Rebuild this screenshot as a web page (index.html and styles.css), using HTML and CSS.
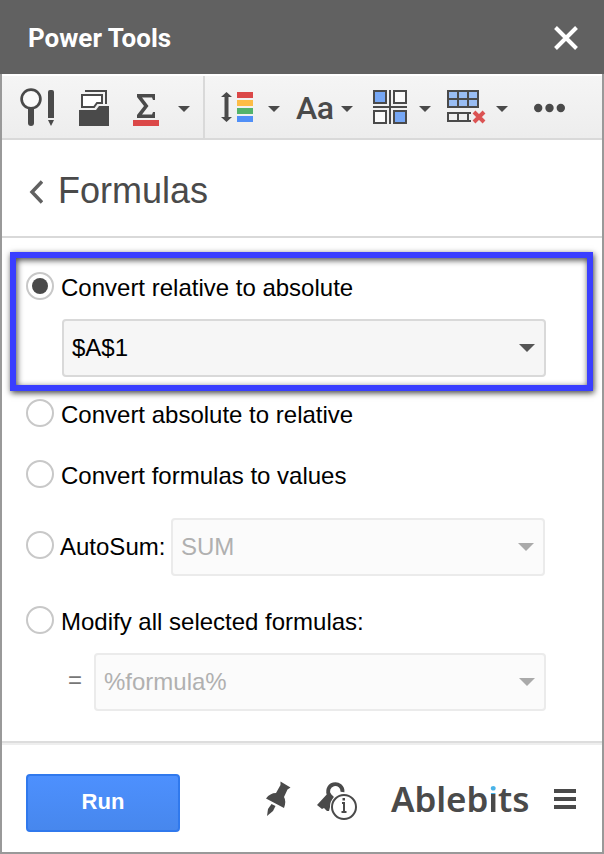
FILE: index.html
```html
<!DOCTYPE html>
<html lang="en">
<head>
    <meta charset="UTF-8">
    <meta name="viewport" content="width=device-width, initial-scale=1.0">
    <title>Power Tools</title>
    <link rel="stylesheet" href="styles.css">
</head>
<body>
    <div class="header">
        <h1>Power Tools</h1>
        <svg class="close" width="24" height="24" viewBox="0 0 24 24">
            <path d="M1.500 1.500L22.500 22.500M22.500 1.500L1.500 22.500" stroke="#fff" stroke-width="4"/>
        </svg>
    </div>

    <div class="panel">
        <div class="toolbar">
            <div class="tools-main">
                <!-- Search and edit -->
                <svg class="ic-search" width="36" height="38" viewBox="0 0 36 38">
                    <circle cx="11" cy="11" r="9.400" fill="#fafafa" stroke="#4a4a4a" stroke-width="2.700"/>
                    <path d="M11 21V35" stroke="#4a4a4a" stroke-width="6"/>
                    <path d="M11 30V35" stroke="#4a4a4a" stroke-width="6" stroke-linecap="round"/>
                    <path d="M28 4q0-2 2-2h2q2 0 2 2V30H28zM28 32h6l-3 6z" fill="#4a4a4a"/>
                </svg>
                <!-- Sheets folder -->
                <svg class="ic-folder" width="30" height="36" viewBox="0 0 30 36">
                    <path d="M6 1H27V14" fill="none" stroke="#4a4a4a" stroke-width="2"/>
                    <path d="M3 5H23V13H18L15 17H3z" fill="#fff" stroke="#4a4a4a" stroke-width="2"/>
                    <path d="M0 20H17L20 16H30V36H0z" fill="#4a4a4a"/>
                </svg>
                <!-- Sum -->
                <svg class="ic-sum" width="26" height="32" viewBox="0 0 26 32">
                    <path d="M4 0H22V6H20L19 3.500H9L15.500 12L9 20.500H19L20 18H22V24H4V21L11 12L4 3z" fill="#4a4a4a"/>
                    <rect y="26" width="26" height="6" fill="#db4848"/>
                </svg>
                <span class="arrow"></span>
            </div>
            <div class="tools-more">
                <!-- Sort by color -->
                <svg class="ic-sort" width="32" height="32" viewBox="0 0 32 32">
                    <path d="M5.500 1L11 6H7.500V26H11L5.500 31L0 26H3.500V6H0z" fill="#4a4a4a"/>
                    <rect x="16" y="1" width="16" height="6" fill="#db4848"/>
                    <rect x="16" y="9" width="16" height="6" fill="#fdbc45"/>
                    <rect x="16" y="17" width="16" height="6" fill="#53b36a"/>
                    <rect x="16" y="25" width="16" height="6" fill="#508ff7"/>
                </svg>
                <span class="arrow"></span>
                <span class="text-tool">Aa</span>
                <span class="arrow"></span>
                <!-- Split -->
                <svg class="ic-split" width="34" height="34" viewBox="0 0 34 34">
                    <g stroke="#4a4a4a" stroke-width="2" fill="#fafafa">
                        <rect x="1" y="1" width="12" height="12" fill="#76a7f5"/>
                        <rect x="21" y="1" width="12" height="12"/>
                        <rect x="1" y="21" width="12" height="12"/>
                        <rect x="21" y="21" width="12" height="12" fill="#76a7f5"/>
                        <path d="M17 0V34M0 17H34"/>
                    </g>
                </svg>
                <span class="arrow"></span>
                <!-- Clear rows -->
                <svg class="ic-clear" width="40" height="34" viewBox="0 0 40 34">
                    <g stroke="#4a4a4a" stroke-width="2" fill="none">
                        <path d="M1 1H31V17H1z" fill="#99bdf3"/>
                        <path d="M11 1V17M21 1V17M1 9H31"/>
                        <path d="M24 23H1V31H24M11 23V31M21 23V31"/>
                    </g>
                    <path d="M27 22L37 32M37 22L27 32" stroke="#db5353" stroke-width="4"/>
                </svg>
                <span class="arrow"></span>
                <svg class="ic-dots" width="32" height="8" viewBox="0 0 32 8">
                    <g fill="#4a4a4a">
                        <circle cx="4.200" cy="4" r="4.200"/>
                        <circle cx="15.500" cy="4" r="4.200"/>
                        <circle cx="26.800" cy="4" r="4.200"/>
                    </g>
                </svg>
            </div>
        </div>

        <div class="title">
            <svg width="14" height="24" viewBox="0 0 14 24">
                <path d="M13 1.500L3 12L13 22.500" fill="none" stroke="#616161" stroke-width="3.500"/>
            </svg>
            <h2>Formulas</h2>
        </div>

        <div class="options">
            <div class="highlight">
                <label class="option">
                    <span class="radio checked"></span>
                    <span>Convert relative to absolute</span>
                </label>
                <div class="select">$A$1<span class="arrow"></span></div>
            </div>
            <label class="option opt-relative">
                <span class="radio"></span>
                <span>Convert absolute to relative</span>
            </label>
            <label class="option opt-values">
                <span class="radio"></span>
                <span>Convert formulas to values</span>
            </label>
            <div class="sum-row">
                <label class="option">
                    <span class="radio"></span>
                    <span>AutoSum:</span>
                </label>
                <div class="select disabled">SUM<span class="arrow"></span></div>
            </div>
            <label class="option opt-modify">
                <span class="radio"></span>
                <span>Modify all selected formulas:</span>
            </label>
            <div class="formula-row">
                <span class="equals">=</span>
                <div class="select disabled">%formula%<span class="arrow"></span></div>
            </div>
        </div>

        <div class="footer">
            <button class="run">Run</button>
            <!-- Pin -->
            <svg class="ic-pin" width="26" height="36" viewBox="0 0 26 36">
                <path d="M14.500 0.500L24.500 6.500L21.500 8.500L18 16Q20.500 20 18 27L0 17.500Q4 12 10 12L14.500 4z" fill="#4a4a4a"/>
                <path d="M5.500 23L9.500 25L7 30L1 35L2 28z" fill="#4a4a4a"/>
            </svg>
            <!-- License key -->
            <svg class="ic-key" width="40" height="40" viewBox="0 0 40 40">
                <path d="M12.500 14.500A7.200 7.200 0 1 1 25.500 11" fill="none" stroke="#4a4a4a" stroke-width="3.800"/>
                <path d="M12 11L17 16L14 22L12 30L10 30L7 27L5 28L0 24z" fill="#4a4a4a"/>
                <circle cx="27" cy="26" r="14" fill="#fff"/>
                <circle cx="27" cy="26" r="12" fill="#fff" stroke="#4a4a4a" stroke-width="2"/>
                <path d="M25 22H27V31M24.500 31H29.500" fill="none" stroke="#4a4a4a" stroke-width="2"/>
                <rect x="25.500" y="17" width="2.500" height="2.500" fill="#4a4a4a"/>
            </svg>
            <div class="logo">Ableb<span class="logo-i">i</span>ts</div>
            <div class="menu"><span></span><span></span><span></span></div>
        </div>
    </div>
</body>
</html>
```

FILE: styles.css
```css
* {
    box-sizing: border-box;
}
body {
    margin: 0;
    height: 854px;
    display: flex;
    flex-direction: column;
    font-family: "Liberation Sans", Arial, sans-serif;
    font-size: 24px;
    color: #000;
    overflow: hidden;
}
svg {
    display: block;
    flex: none;
}
.header {
    height: 74px;
    padding: 2px 26px 0 28px;
    display: flex;
    align-items: center;
    justify-content: space-between;
    background: #616161;
    color: #fff;
}
.header h1 {
    margin: 0;
    font: bold 26px Roboto, sans-serif;
}
.panel {
    height: 780px;
    border: 2px solid #999;
    border-top: 0;
    background: #fff;
}
.toolbar {
    height: 66px;
    display: flex;
    border-top: 2px solid #fff;
    border-bottom: 2px solid #d9d9d9;
    background: linear-gradient(#f5f5f5, #ededed);
}
.tools-main,
.tools-more {
    display: flex;
    align-items: flex-start;
}
.tools-main {
    width: 203px;
    padding-left: 18px;
    border-right: 2px solid #d9d9d9;
}
.tools-more {
    padding-left: 16px;
}
.arrow {
    flex: none;
    border: 6px solid transparent;
    border-top-color: #4a4a4a;
    border-bottom: 0;
}
.toolbar .arrow {
    margin-top: 30px;
}
.ic-search {
    margin-top: 12px;
}
.ic-folder {
    margin: 14px 0 0 23px;
}
.ic-sum {
    margin: 18px 19px 0 24px;
}
.ic-sort {
    margin: 15px 15px 0 0;
}
.text-tool {
    width: 36px;
    margin: 12px 9px 0 16px;
    font: 500 32px/40px Roboto, sans-serif;
    letter-spacing: -0.5px;
    color: #4a4a4a;
}
.ic-split {
    margin: 14px 12px 0 20px;
}
.ic-clear {
    margin: 14px 9px 0 16px;
}
.ic-dots {
    margin: 28px 0 0 26px;
    overflow: visible;
}
.title {
    height: 98px;
    padding: 5px 0 0 27px;
    display: flex;
    align-items: center;
    gap: 15px;
    border-bottom: 2px solid #d9d9d9;
}
.title svg {
    margin-top: 3px;
}
.title h2 {
    margin: 0;
    font-size: 36px;
    font-weight: normal;
    color: #4a4a4a;
}
.options {
    height: 503px;
    padding: 14px 9px 0 8px;
}
.highlight {
    height: 139px;
    padding: 14px 10px 0;
    border: 6px solid #393eff;
    box-shadow: 1px 2px 6px rgba(0, 0, 0, 0.75), inset 1px 2px 6px rgba(0, 0, 0, 0.75);
}
.option {
    height: 28px;
    display: flex;
    align-items: center;
    gap: 7px;
    white-space: nowrap;
}
.option span + span {
    margin-top: 4px;
}
.radio {
    width: 28px;
    height: 28px;
    flex: none;
    border: 2px solid #c8c8c8;
    border-radius: 50%;
    background: #fff;
}
.radio.checked {
    padding: 4px;
    background: #4a4a4a content-box;
}
.select {
    height: 58px;
    padding: 0 9px 0 8px;
    display: flex;
    align-items: center;
    justify-content: space-between;
    border: 2px solid #d9d9d9;
    border-radius: 4px;
    background: #f6f6f6;
}
.select .arrow {
    border-width: 8px 8px 0;
    border-top-color: #555;
}
.highlight .select {
    width: 484px;
    margin: 19px 0 0 36px;
}
.select.disabled {
    border-color: #ebebeb;
    background: #fbfbfb;
    color: #b0b0b0;
}
.disabled .arrow {
    border-top-color: #aaa;
}
.opt-relative {
    margin: 8px 0 0 16px;
}
.opt-values {
    margin: 33px 0 0 16px;
}
.sum-row {
    margin: 30px 0 0 16px;
    display: flex;
}
.sum-row .option {
    width: 145px;
    margin-top: 13px;
    gap: 6px;
}
.sum-row .select {
    width: 374px;
}
.opt-modify {
    margin: 30px 0 0 16px;
}
.formula-row {
    margin: 19px 0 0 58px;
    display: flex;
    align-items: center;
}
.equals {
    width: 26px;
    margin-top: -5px;
    color: #777;
}
.formula-row .select {
    width: 452px;
}
.footer {
    height: 111px;
    padding: 29px 0 0 24px;
    display: flex;
    align-items: flex-start;
    border-top: 2px solid #ddd;
    box-shadow: inset 0 2px #eee;
}
.run {
    width: 154px;
    height: 58px;
    padding: 0 0 2px;
    margin-top: 2px;
    border: 2px solid #3079ed;
    border-radius: 4px;
    background: linear-gradient(#4d90fe, #4787ed);
    color: #fff;
    font: bold 22px "Liberation Sans", Arial, sans-serif;
}
.ic-pin {
    margin: 9px 0 0 86px;
}
.ic-key {
    margin: 9px 0 0 25px;
}
.logo {
    width: 138px;
    margin: 3px 0 0 34px;
    font: 600 35px/48px "Noto Sans", sans-serif;
    letter-spacing: -0.1px;
    color: #4a4a4a;
}
.logo-i {
    background: linear-gradient(#49b3e8 19px, #4a4a4a 19px);
    -webkit-background-clip: text;
    background-clip: text;
    color: transparent;
}
.menu {
    width: 22px;
    margin: 17px 0 0 25px;
    display: flex;
    flex-direction: column;
    gap: 4px;
}
.menu span {
    height: 4px;
    background: #4a4a4a;
}
```
